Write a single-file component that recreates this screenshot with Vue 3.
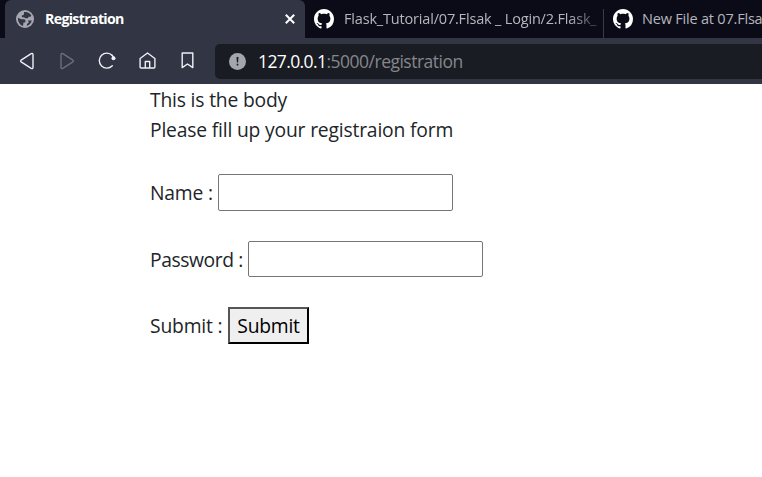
<script setup>
const fields = [
  { id: 'name', label: 'Name :', type: 'text' },
  { id: 'password', label: 'Password :', type: 'password' },
]
const tabs = [
  { title: 'Flask_Tutorial/07.Flsak _ Login/2.Flask_', cls: 'tab-second' },
  { title: 'New File at 07.Flsa', cls: 'tab-third' },
]
</script>

<template>
  <div class="window">
    <header class="tab-strip">
      <div class="tab active">
        <svg class="globe" viewBox="0 0 18 18" width="18" height="18">
          <circle cx="9" cy="9" r="9" fill="#a4a7af" />
          <path d="M8 2.100C10.700 1.500 14 2.800 15.300 5.600L14.600 6.700H12.800L11.700 8.300H9.500L8 7.200H6L5.700 5.700L8 4.600Z" fill="#323543" />
          <path d="M2 7.800L5 9.200H8.300L9.600 10.600L9.200 12.600H7.500L7 16C4 15.100 1.700 12 2 7.800Z" fill="#323543" />
          <path d="M12 10.600H15.800C15.200 13.300 13.300 15.200 10.900 15.900L11 14L12.800 12.600Z" fill="#323543" />
        </svg>
        <span class="tab-title">Registration</span>
        <svg class="close" viewBox="0 0 10 10" width="10" height="10">
          <path d="M.8.8 9.200 9.200M9.200.8.8 9.200" fill="none" stroke="#fff" stroke-width="2" />
        </svg>
      </div>
      <div v-for="tab in tabs" :key="tab.cls" class="tab" :class="tab.cls">
        <svg class="github" viewBox="0 0 16 16" width="20" height="20">
          <path fill="#fff" d="M8 0C3.580 0 0 3.580 0 8c0 3.540 2.290 6.530 5.470 7.590.4.070.55-.17.55-.38 0-.19-.01-.82-.01-1.490-2.010.37-2.530-.49-2.690-.94-.09-.23-.48-.94-.82-1.130-.28-.15-.68-.52-.01-.53.63-.01 1.080.58 1.230.82.72 1.210 1.870.87 2.330.66.07-.52.28-.87.51-1.070-1.780-.2-3.640-.89-3.640-3.950 0-.87.31-1.590.82-2.150-.08-.2-.36-1.020.08-2.120 0 0 .67-.21 2.200.82.64-.18 1.320-.27 2-.27s1.360.09 2 .27c1.530-1.040 2.200-.82 2.200-.82.44 1.100.16 1.920.08 2.120.51.56.82 1.270.82 2.150 0 3.070-1.870 3.750-3.650 3.950.29.25.54.73.54 1.480 0 1.070-.01 1.930-.01 2.200 0 .21.15.46.55.38A8.010 8.010 0 0 0 16 8c0-4.420-3.580-8-8-8Z" />
        </svg>
        <span class="tab-title">{{ tab.title }}</span>
      </div>
    </header>

    <nav class="toolbar">
      <div class="tools">
        <svg viewBox="0 0 20 20" width="20" height="20">
          <path d="M14.200 2.600 4.100 9.200Q3 10 4.100 10.800L14.200 17.400Q16 18.200 16 16.200V3.800Q16 1.800 14.200 2.600Z" />
        </svg>
        <svg class="disabled" viewBox="0 0 20 20" width="20" height="20">
          <path d="M5.800 2.600 15.900 9.200Q17 10 15.900 10.800L5.800 17.400Q4 18.200 4 16.200V3.800Q4 1.800 5.800 2.600Z" />
        </svg>
        <svg viewBox="0 0 20 20" width="20" height="20">
          <path d="M15.300 4.500A7.500 7.500 0 1 0 15.300 14.700" />
          <circle class="dot" cx="16.500" cy="7.200" r="2" />
          <path d="M15 4.200 16.800 6.500" />
        </svg>
        <svg viewBox="0 0 20 20" width="20" height="20">
          <path d="M3.100 7.500 10.500 2 17.900 7.500V16Q17.900 17 16.900 17H4.100Q3.100 17 3.100 16ZM8.300 16.800V10.500H12.700V16.800" />
        </svg>
        <svg viewBox="0 0 20 20" width="20" height="20">
          <path d="M5.200 2H15.800V16.600L10.500 13 5.200 16.600Z" />
        </svg>
      </div>
      <div class="address">
        <svg viewBox="0 0 17 17" width="17" height="17">
          <circle cx="8.500" cy="8.500" r="8.500" fill="#a3a6ad" />
          <path d="M7.500 4H9.500L9.100 9.500H7.900ZM7.700 10.800H9.300V12.400H7.700Z" fill="#191c23" />
        </svg>
        <span class="url"><span class="host">127.0.0.1</span><span class="path">:5000/registration</span></span>
      </div>
    </nav>

    <main class="page">
      <p class="line first">This is the body</p>
      <p class="line second">Please fill up your registraion form</p>
      <form class="form" @submit.prevent>
        <div v-for="field in fields" :key="field.id" class="row" :class="field.id">
          <label :for="field.id"><span>{{ field.label }}</span></label>
          <input :id="field.id" :type="field.type" />
        </div>
        <div class="row submit">
          <label for="send"><span>Submit :</span></label>
          <button id="send" type="submit">Submit</button>
        </div>
      </form>
    </main>
  </div>
</template>

<style>
body {
  background: #fff;
  overflow: hidden;
}
</style>

<style scoped>
.window {
  width: 100%;
  height: 477px;
  overflow: hidden;
  font-family: "Open Sans", "Noto Sans", sans-serif;
}
svg {
  display: block;
  flex: none;
}
.tab-strip {
  display: flex;
  height: 38px;
  padding-left: 5px;
  background: #0b0b18;
  overflow: hidden;
}
.tab {
  display: flex;
  align-items: center;
  flex: none;
  box-sizing: border-box;
  height: 38px;
  color: #b5b6bc;
  font-size: 14.500px;
  white-space: nowrap;
}
.tab-title {
  padding-bottom: 2px;
}
.active {
  width: 300px;
  padding: 0 10px 0 11px;
  border-radius: 6px 6px 0 0;
  background: #323543;
  color: #fff;
  font-size: 14.200px;
  font-weight: 700;
}
.active .tab-title {
  margin-left: 11px;
  letter-spacing: -0.68px;
}
.close {
  margin-left: auto;
}
.tab-second {
  width: 299px;
  padding-left: 9px;
  background: linear-gradient(#3a3c45, #3a3c45) right bottom / 1px 29px no-repeat;
}
.tab-second .tab-title {
  width: 255px;
  margin-left: 10px;
  overflow: hidden;
  letter-spacing: -0.18px;
  mask-image: linear-gradient(90deg, #000 225px, transparent 262px);
}
.tab-third {
  padding-left: 9px;
}
.tab-third .tab-title {
  margin-left: 9px;
  letter-spacing: -0.2px;
}
.toolbar {
  display: flex;
  align-items: center;
  height: 46px;
  box-sizing: border-box;
  padding-left: 17px;
  background: #323543;
}
.tools {
  display: flex;
  gap: 20px;
  fill: none;
  stroke: #eef0f5;
  stroke-width: 1.4;
  stroke-linejoin: round;
  stroke-linecap: round;
}
.disabled {
  stroke: #6c6f7b;
}
.dot {
  fill: #eef0f5;
  stroke: none;
}
.address {
  display: flex;
  align-items: center;
  flex: 1;
  height: 35px;
  box-sizing: border-box;
  margin-left: 18px;
  padding-left: 14px;
  border-radius: 5px 0 0 5px;
  background: #191c23;
}
.url {
  margin-left: 12px;
  padding-bottom: 1px;
  color: #85878b;
  font-size: 17.500px;
  line-height: 24px;
  letter-spacing: -0.5px;
  white-space: nowrap;
}
.host {
  color: #fff;
  letter-spacing: -0.6px;
}
.page {
  padding: 1px 0 0 150px;
  color: #212529;
  font-size: 19.300px;
  letter-spacing: -0.18px;
}
.line {
  margin: 0;
  line-height: 30px;
  white-space: nowrap;
}
.form {
  display: flex;
  flex-direction: column;
  gap: 30px;
  margin-top: 29px;
}
.row {
  display: flex;
  align-items: center;
  height: 36.500px;
}
label {
  flex: none;
  padding-top: 1px;
  box-sizing: border-box;
  line-height: 28px;
  white-space: nowrap;
}
.name label {
  width: 68px;
}
.password label {
  width: 98px;
  padding-top: 3px;
  letter-spacing: -0.42px;
}
.submit label {
  width: 78px;
}
input {
  width: 235px;
  height: 36.500px;
  box-sizing: border-box;
  border: 1px solid #767676;
  border-radius: 2px;
  background: #fff;
  outline: none;
  font: inherit;
}
button {
  width: 81px;
  height: 37px;
  box-sizing: border-box;
  padding: 2px 0 0;
  border: 2px solid;
  border-color: #555 #000 #000 #555;
  border-radius: 0;
  background: #efefef;
  color: #000;
  font: inherit;
  line-height: 30px;
  letter-spacing: -0.25px;
}
</style>
